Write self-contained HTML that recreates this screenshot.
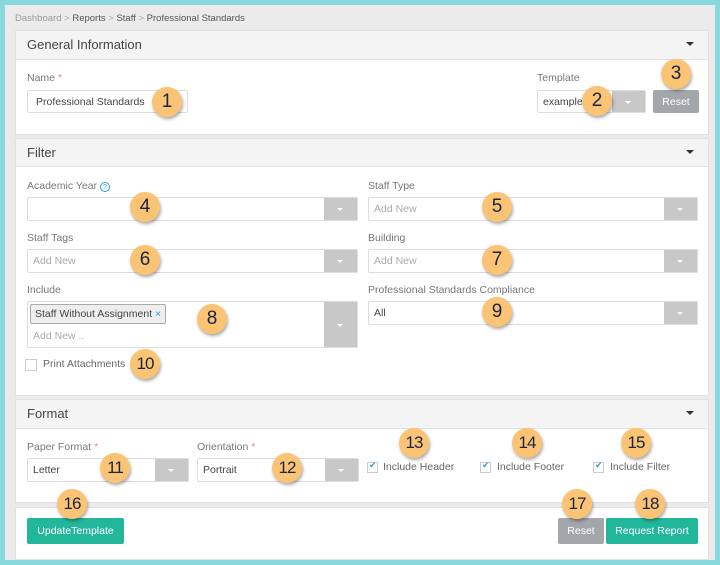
<!DOCTYPE html><html><head><style>
*{box-sizing:border-box;margin:0;padding:0}
body{width:720px;height:565px;background:#88d9de;font-family:"Liberation Sans",sans-serif;position:relative;overflow:hidden;color:#555}
#bg{position:absolute;left:5px;top:5px;width:710px;height:555px;background:#ebebeb}
.a{position:absolute}
.panel{position:absolute;left:15px;width:694px;background:#fff;border:1px solid #e2e2e2}
.hd{position:absolute;left:15px;width:694px;background:#f4f4f4;border:1px solid #e2e2e2;font-size:13px;color:#444;padding-left:11px}
.hd .car{position:absolute;right:14px;top:11px;width:0;height:0;border-left:4px solid transparent;border-right:4px solid transparent;border-top:4px solid #333}
.lbl{position:absolute;font-size:10.5px;color:#777}
.req{color:#e87;}
.in{position:absolute;background:#fff;border:1px solid #ddd;font-size:10.5px;color:#444;padding-left:8px;border-radius:2px}
.ph{color:#aaa}
.arr{position:absolute;right:0;top:0;bottom:0;width:33px;background:#c8c8c8}
.arr:after{content:"";position:absolute;left:13px;top:50%;margin-top:-1px;border-left:3px solid transparent;border-right:3px solid transparent;border-top:3px solid #fff}
.b{position:absolute;width:30px;height:30px;border-radius:50%;background:#fbc374;box-shadow:1px 2px 3px rgba(0,0,0,.35);color:#1b2440;font-size:19px;text-align:center;line-height:30px}
.b2{font-size:17px;letter-spacing:-1px}
.cb{position:absolute;width:11px;height:11px;border:1px solid #ccc;background:#fff}
.cb.on:after{content:"✔";position:absolute;left:1px;top:-3px;font-size:9px;color:#2aa0d8}
.ct{position:absolute;font-size:10.5px;color:#666}
.btn{position:absolute;color:#fff;font-size:10.5px;text-align:center;border-radius:2px}
</style></head><body>
<div id="bg"></div>
<div class="a" style="left:15px;top:13px;font-size:9.5px;color:#999">Dashboard <span style="color:#aaa">&gt;</span> <span style="color:#555">Reports</span> <span style="color:#aaa">&gt;</span> <span style="color:#555">Staff</span> <span style="color:#aaa">&gt;</span> <span style="color:#555">Professional Standards</span></div>

<div class="panel" style="top:30px;height:105px"></div>
<div class="hd" style="top:30px;height:30px;line-height:28px">General Information<div class="car"></div></div>
<div class="lbl" style="left:27px;top:72px">Name <span class="req">*</span></div>
<div class="in" style="left:27px;top:90px;width:161px;height:23px;line-height:22px">Professional Standards</div>
<div class="lbl" style="left:537px;top:72px">Template</div>
<div class="in" style="left:537px;top:90px;width:109px;height:23px;line-height:22px;padding-left:5px">example<div class="arr"></div></div>
<div class="btn" style="left:653px;top:90px;width:46px;height:23px;line-height:24px;background:#a3a7ab">Reset</div>

<div class="panel" style="top:138px;height:258px"></div>
<div class="hd" style="top:138px;height:29px;line-height:27px">Filter<div class="car"></div></div>
<div class="lbl" style="left:27px;top:180px">Academic Year <span style="color:#2aa0d8;border:1px solid #2aa0d8;border-radius:50%;font-size:7px;display:inline-block;width:10px;height:10px;text-align:center;line-height:9px">?</span></div>
<div class="in" style="left:27px;top:197px;width:331px;height:24px"><div class="arr"></div></div>
<div class="lbl" style="left:368px;top:180px">Staff Type</div>
<div class="in" style="left:368px;top:197px;width:330px;height:24px;line-height:23px;padding-left:5px"><span class="ph">Add New</span><div class="arr"></div></div>
<div class="lbl" style="left:27px;top:232px">Staff Tags</div>
<div class="in" style="left:27px;top:249px;width:331px;height:24px;line-height:23px;padding-left:5px"><span class="ph">Add New</span><div class="arr"></div></div>
<div class="lbl" style="left:368px;top:232px">Building</div>
<div class="in" style="left:368px;top:249px;width:330px;height:24px;line-height:23px;padding-left:5px"><span class="ph">Add New</span><div class="arr"></div></div>
<div class="lbl" style="left:27px;top:284px">Include</div>
<div class="in" style="left:27px;top:301px;width:331px;height:47px;padding-left:3px"><div class="arr"></div>
<div class="a" style="left:2px;top:2px;height:20px;width:136px;border:1px solid #aaa;background:#eee;border-radius:2px;line-height:18px;padding-left:4px;color:#444">Staff Without Assignment <span style="color:#2aa0d8">×</span></div>
<div class="a ph" style="left:5px;top:28px">Add New ..</div></div>
<div class="lbl" style="left:368px;top:284px">Professional Standards Compliance</div>
<div class="in" style="left:368px;top:301px;width:330px;height:24px;line-height:23px;padding-left:5px">All<div class="arr"></div></div>
<div class="cb" style="left:25px;top:359px;width:12px;height:12px"></div>
<div class="ct" style="left:43px;top:358px">Print Attachments</div>

<div class="panel" style="top:399px;height:104px"></div>
<div class="hd" style="top:399px;height:30px;line-height:28px">Format<div class="car"></div></div>
<div class="lbl" style="left:27px;top:441px">Paper Format <span class="req">*</span></div>
<div class="in" style="left:27px;top:458px;width:162px;height:24px;line-height:23px;padding-left:5px">Letter<div class="arr"></div></div>
<div class="lbl" style="left:197px;top:441px">Orientation <span class="req">*</span></div>
<div class="in" style="left:197px;top:458px;width:162px;height:24px;line-height:23px;padding-left:5px">Portrait<div class="arr"></div></div>
<div class="cb on" style="left:367px;top:462px"></div><div class="ct" style="left:383px;top:461px">Include Header</div>
<div class="cb on" style="left:480px;top:462px"></div><div class="ct" style="left:497px;top:461px">Include Footer</div>
<div class="cb on" style="left:593px;top:462px"></div><div class="ct" style="left:610px;top:461px">Include Filter</div>

<div class="panel" style="top:507px;height:53px"></div>
<div class="btn" style="left:27px;top:518px;width:97px;height:26px;line-height:27px;background:#22b79b">UpdateTemplate</div>
<div class="btn" style="left:558px;top:518px;width:46px;height:26px;line-height:27px;background:#a3a7ab">Reset</div>
<div class="btn" style="left:606px;top:518px;width:92px;height:26px;line-height:27px;background:#22b79b">Request Report</div>

<div class="b" style="left:152px;top:87px">1</div>
<div class="b" style="left:582px;top:86px">2</div>
<div class="b" style="left:661px;top:59px">3</div>
<div class="b" style="left:130px;top:192px">4</div>
<div class="b" style="left:482px;top:192px">5</div>
<div class="b" style="left:130px;top:245px">6</div>
<div class="b" style="left:482px;top:245px">7</div>
<div class="b" style="left:197px;top:304px">8</div>
<div class="b" style="left:482px;top:297px">9</div>
<div class="b b2" style="left:130px;top:349px">10</div>
<div class="b b2" style="left:100px;top:453px">11</div>
<div class="b b2" style="left:272px;top:453px">12</div>
<div class="b b2" style="left:399px;top:428px">13</div>
<div class="b b2" style="left:512px;top:428px">14</div>
<div class="b b2" style="left:621px;top:428px">15</div>
<div class="b b2" style="left:57px;top:489px">16</div>
<div class="b b2" style="left:562px;top:489px">17</div>
<div class="b b2" style="left:635px;top:489px">18</div>
</body></html>
